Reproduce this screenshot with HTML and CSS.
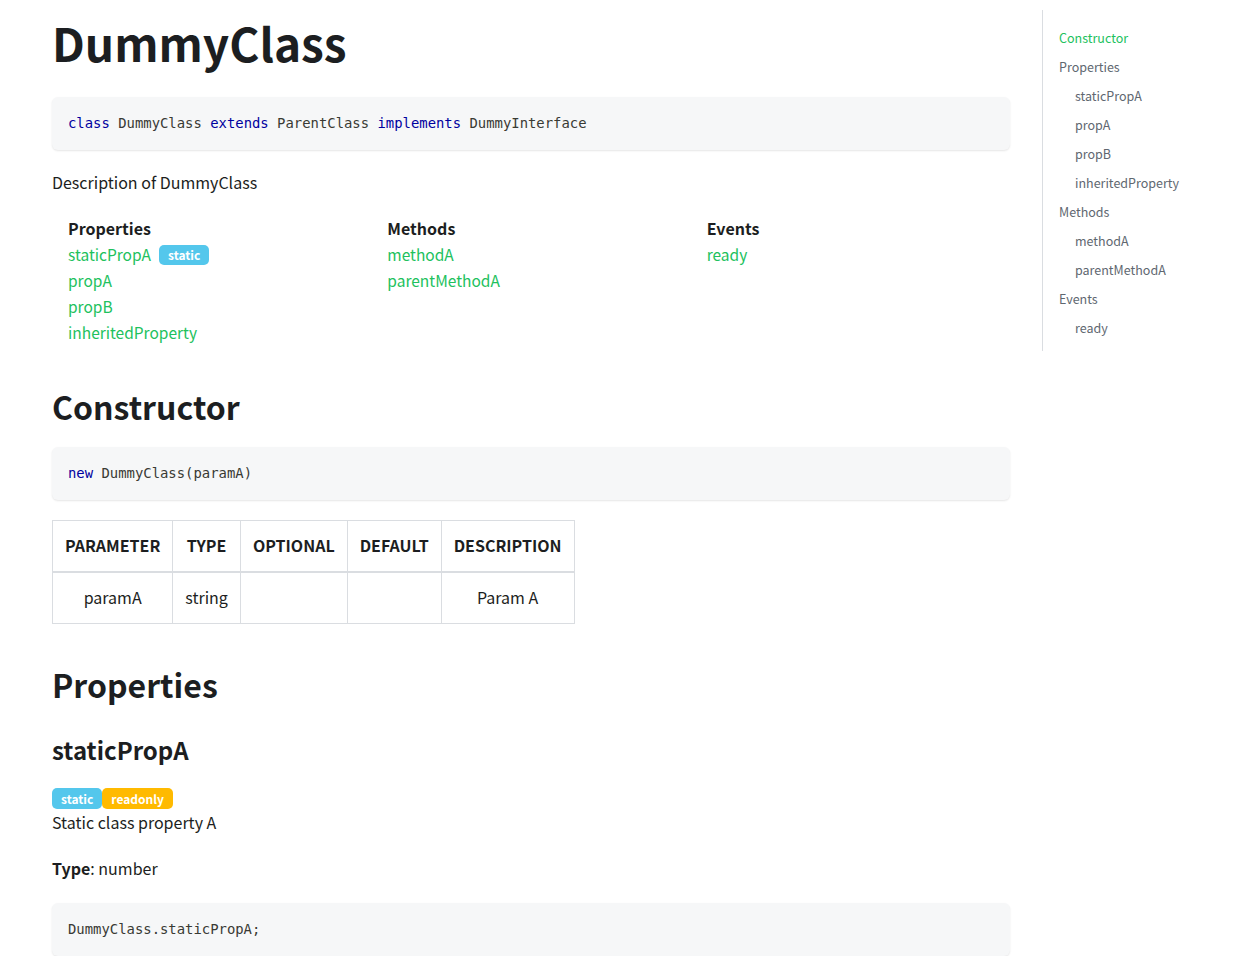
FILE: index.html
```html
<!DOCTYPE html>
<html lang="en">
<head>
<meta charset="utf-8">
<title>DummyClass</title>
<link rel="stylesheet" href="styles.css">
</head>
<body>
<div class="layout">
  <main class="main">
    <h1 class="title">DummyClass</h1>
    <pre class="code"><code><span class="kw">class</span> DummyClass <span class="kw">extends</span> ParentClass <span class="kw">implements</span> DummyInterface</code></pre>
    <p class="desc">Description of DummyClass</p>
    <div class="summary">
      <div class="col">
        <div class="col-head">Properties</div>
        <a class="link" href="#">staticPropA</a><span class="badge badge-info badge-gap">static</span><br>
        <a class="link" href="#">propA</a><br>
        <a class="link" href="#">propB</a><br>
        <a class="link" href="#">inheritedProperty</a>
      </div>
      <div class="col">
        <div class="col-head">Methods</div>
        <a class="link" href="#">methodA</a><br>
        <a class="link" href="#">parentMethodA</a>
      </div>
      <div class="col">
        <div class="col-head">Events</div>
        <a class="link" href="#">ready</a>
      </div>
    </div>

    <h2 class="h2 h2-first">Constructor</h2>
    <pre class="code"><code><span class="kw">new</span> DummyClass(paramA)</code></pre>
    <table class="params">
      <thead>
        <tr><th>PARAMETER</th><th>TYPE</th><th>OPTIONAL</th><th>DEFAULT</th><th>DESCRIPTION</th></tr>
      </thead>
      <tbody>
        <tr><td>paramA</td><td>string</td><td></td><td></td><td>Param A</td></tr>
      </tbody>
    </table>

    <h2 class="h2">Properties</h2>
    <h3 class="h3">staticPropA</h3>
    <div class="badges"><span class="badge badge-info">static</span><span class="badge badge-warn">readonly</span></div>
    <p class="text">Static class property A</p>
    <p class="type"><strong>Type</strong>: number</p>
    <pre class="code"><code>DummyClass.staticPropA;</code></pre>
  </main>
  <nav class="toc">
    <ul class="toc-list">
      <li><a class="toc-link active" href="#">Constructor</a></li>
      <li><a class="toc-link" href="#">Properties</a>
        <ul class="toc-sub">
          <li><a class="toc-link" href="#">staticPropA</a></li>
          <li><a class="toc-link" href="#">propA</a></li>
          <li><a class="toc-link" href="#">propB</a></li>
          <li><a class="toc-link" href="#">inheritedProperty</a></li>
        </ul>
      </li>
      <li><a class="toc-link" href="#">Methods</a>
        <ul class="toc-sub">
          <li><a class="toc-link" href="#">methodA</a></li>
          <li><a class="toc-link" href="#">parentMethodA</a></li>
        </ul>
      </li>
      <li><a class="toc-link" href="#">Events</a>
        <ul class="toc-sub">
          <li><a class="toc-link" href="#">ready</a></li>
        </ul>
      </li>
    </ul>
  </nav>
</div>
</body>
</html>
```

FILE: styles.css
```css
html, body {
  margin: 0;
  padding: 0;
  background: #ffffff;
}
body {
  font-family: "Noto Sans CJK KR", "Noto Sans", sans-serif;
  font-size: 16px;
  color: #1c1e21;
  line-height: 1.6;
}
.layout {
  display: flex;
  align-items: flex-start;
}
.main {
  width: 958px;
  margin-left: 52px;
  flex: none;
}
.title {
  font-size: 46px;
  font-weight: 700;
  line-height: 58px;
  margin: 13px 0 26px;
  letter-spacing: 0;
}
.code {
  margin: 0;
  background: #f6f7f8;
  border-radius: 6px;
  box-shadow: 0 1px 2px rgba(0, 0, 0, 0.1);
  padding: 16px;
  height: 21px;
  font-family: "DejaVu Sans Mono", "Liberation Mono", monospace;
  font-size: 13.9px;
  line-height: 21px;
  color: #393a34;
}
.kw {
  color: #00009f;
}
.desc {
  margin: 19px 0 0;
  line-height: 26px;
}
.summary {
  display: grid;
  grid-template-columns: 1fr 1fr 1fr;
  margin-top: 20px;
}
.col {
  padding: 0 16px;
  line-height: 26px;
}
.col-head {
  font-weight: 700;
}
.link {
  color: #21c15d;
  text-decoration: none;
  font-size: 15.5px;
}
.badge {
  display: inline-block;
  font-size: 12px;
  font-weight: 700;
  color: #fff;
  line-height: 20px;
  padding: 0 9px;
  border-radius: 5px;
  vertical-align: 1px;
}
.badge-gap {
  margin-left: 8px;
}
.badge-info {
  background: #54c7ec;
}
.badge-warn {
  background: #ffba00;
}
.h2 {
  font-size: 32px;
  font-weight: 700;
  line-height: 1.25;
  margin: 40px 0 20px;
}
.h2-first {
  margin-top: 41px;
  margin-bottom: 21px;
}
.params {
  border-collapse: collapse;
  margin-top: 20px;
}
.params th,
.params td {
  border: 1px solid #dadde1;
  padding: 12px;
  text-align: center;
  height: 26px;
}
.params th {
  font-weight: 700;
  border-bottom-width: 2px;
}
.params td {
  font-weight: 400;
}
.h3 {
  font-size: 24px;
  font-weight: 700;
  line-height: 1.25;
  margin: 31px 0 23px;
}
.badges {
  display: flex;
  height: 21px;
}
.badges .badge {
  line-height: 21px;
  padding: 0 9px;
}
.text {
  margin: 0;
  line-height: 26px;
}
.type {
  margin: 20px 0 22px;
  line-height: 26px;
}
.toc {
  margin-left: 32px;
  margin-top: 10px;
  border-left: 1px solid #dadde1;
  width: 200px;
  padding: 13px 0 9px 16px;
}
.toc-list,
.toc-sub {
  list-style: none;
  margin: 0;
  padding: 0;
}
.toc-sub {
  padding-left: 16px;
}
.toc-link {
  display: block;
  font-size: 12.5px;
  line-height: 29px;
  color: #606770;
  text-decoration: none;
}
.toc-link.active {
  color: #21c15d;
}
```
